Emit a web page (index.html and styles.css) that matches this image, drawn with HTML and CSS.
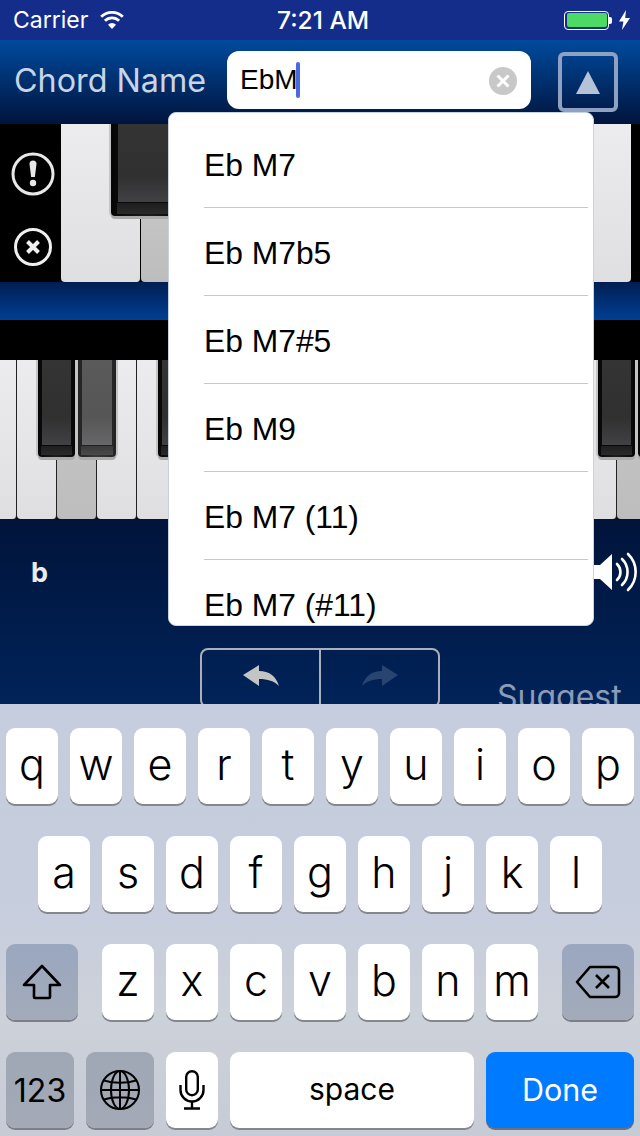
FILE: index.html
```html
<!DOCTYPE html>
<html lang="en">
<head>
    <meta charset="UTF-8">
    <title>Chord Name</title>
    <link rel="stylesheet" href="styles.css">
</head>
<body>
    <div id="app">
        <div class="status">
            <div class="status-left">
                <span>Carrier</span>
                <svg width="24" height="18" viewBox="0 0 24 18"><path d="M12 18 8 13.700a5.600 5.600 0 0 1 8 0z" fill="#fff"/><path d="M4.900 9.800a10 10 0 0 1 14.200 0M1.200 5.800a15.300 15.300 0 0 1 21.600 0" fill="none" stroke="#fff" stroke-width="2.800"/></svg>
            </div>
            <div class="status-time">7:21 AM</div>
            <div class="status-right">
                <div class="battery"><div class="battery-fill"></div></div>
                <div class="battery-nub"></div>
                <svg class="bolt" width="11" height="20" viewBox="0 0 11 20"><path d="M7 0 0 11.500h4.400L3 20l8-12H6.200z" fill="#fff"/></svg>
            </div>
        </div>

        <div class="header">
            <div class="chord-label">Chord Name</div>
            <div class="chord-input">
                <span class="chord-text">EbM</span><span class="caret"></span>
                <svg class="clear" width="28" height="28" viewBox="0 0 28 28"><circle cx="14" cy="14" r="14" fill="#c8c8c8"/><path d="M8.500 8.500l11 11M19.500 8.500l-11 11" stroke="#fff" stroke-width="3"/></svg>
            </div>
            <div class="up-btn"><svg width="24" height="23" viewBox="0 0 24 23"><path d="M12 0 24 23H0z" fill="#b6c2d6"/></svg></div>
        </div>

        <div class="upper">
            <div class="side">
                <svg width="44" height="44" viewBox="0 0 44 44"><circle cx="22" cy="22" r="20" fill="none" stroke="#e8e8e8" stroke-width="3"/><path d="M18.500 12a3.500 3.500 0 0 1 7 0l-1.600 13h-3.800z" fill="#e8e8e8"/><circle cx="22" cy="31" r="3.200" fill="#e8e8e8"/></svg>
                <svg width="40" height="40" viewBox="0 0 40 40"><circle cx="20" cy="20" r="17.500" fill="none" stroke="#f0f0f0" stroke-width="3"/><path d="M14.500 14.500l11 11M25.500 14.500l-11 11" stroke="#f0f0f0" stroke-width="4"/></svg>
            </div>
            <div class="upper-keys">
                <div class="wkey wide"></div>
                <div class="wkey wide grey"></div>
                <div class="wkey wide"></div>
                <div class="wkey wide"></div>
                <div class="wkey wide"></div>
                <div class="wkey wide"></div>
                <div class="wkey last"></div>
                <div class="bkey big"><div class="bkey-face"></div></div>
            </div>
            <div class="upper-end"></div>
        </div>

        <div class="band"></div>
        <div class="black-strip"></div>

        <div class="lower">
            <div class="wkey first"></div>
            <div class="wkey"></div>
            <div class="wkey grey"></div>
            <div class="wkey"></div>
            <div class="wkey"></div>
            <div class="wkey"></div>
            <div class="wkey"></div>
            <div class="wkey"></div>
            <div class="wkey"></div>
            <div class="wkey"></div>
            <div class="wkey"></div>
            <div class="wkey"></div>
            <div class="wkey"></div>
            <div class="wkey"></div>
            <div class="wkey"></div>
            <div class="wkey"></div>
            <div class="wkey grey"></div>
            <div class="bkey k1"><div class="bkey-face"></div></div>
            <div class="bkey k2 lit"><div class="bkey-face"></div></div>
            <div class="bkey k3"><div class="bkey-face"></div></div>
            <div class="bkey k4"><div class="bkey-face"></div></div>
            <div class="bkey k5"><div class="bkey-face"></div></div>
        </div>

        <div class="panel">
            <div class="panel-top">
                <span class="flat">b</span>
                <svg width="46" height="40" viewBox="0 0 46 40"><path d="M0 13h8L20 2v36L8 27H0z" fill="#fff"/><path d="M25 12a11 11 0 0 1 0 16M30 7a18 18 0 0 1 0 26M36 2a25 25 0 0 1 0 36" fill="none" stroke="#fff" stroke-width="2.600" stroke-linecap="round"/></svg>
            </div>
            <div class="panel-bottom">
                <div class="undo-group">
                    <div class="undo-cell"><svg width="36" height="22" viewBox="0 0 36 22"><path d="M0 10 16 0v6c10 0 17 5 20 15-5-5-11-7-20-7v7z" fill="#c4c4c4"/></svg></div>
                    <div class="undo-cell"><svg width="36" height="22" viewBox="0 0 36 22"><path d="M36 10 20 0v6C10 6 3 11 0 21c5-5 11-7 20-7v7z" fill="#2a4470"/></svg></div>
                </div>
                <div class="suggest">Suggest</div>
            </div>
        </div>

        <div class="keyboard">
            <div class="kb-row">
                <div class="key">q</div><div class="key">w</div><div class="key">e</div><div class="key">r</div><div class="key">t</div><div class="key">y</div><div class="key">u</div><div class="key">i</div><div class="key">o</div><div class="key">p</div>
            </div>
            <div class="kb-row">
                <div class="key">a</div><div class="key">s</div><div class="key">d</div><div class="key">f</div><div class="key">g</div><div class="key">h</div><div class="key">j</div><div class="key">k</div><div class="key">l</div>
            </div>
            <div class="kb-row row3">
                <div class="key fn shift"><svg width="40" height="36" viewBox="0 0 40 36"><path d="M20 2 38 21H28v12a1 1 0 0 1-1 1H13a1 1 0 0 1-1-1V21H2z" fill="none" stroke="#000" stroke-width="2.600" stroke-linejoin="round"/></svg></div>
                <div class="letters">
                    <div class="key">z</div><div class="key">x</div><div class="key">c</div><div class="key">v</div><div class="key">b</div><div class="key">n</div><div class="key">m</div>
                </div>
                <div class="key fn shift"><svg width="46" height="34" viewBox="0 0 46 34"><path d="M15 2h25a4 4 0 0 1 4 4v22a4 4 0 0 1-4 4H15L2 17z" fill="none" stroke="#000" stroke-width="2.600" stroke-linejoin="round"/><path d="M21 10l13 13M34 10 21 23" stroke="#000" stroke-width="2.600"/></svg></div>
            </div>
            <div class="kb-row">
                <div class="key fn grey-key num">123</div>
                <div class="key fn grey-key num"><svg width="40" height="40" viewBox="0 0 40 40" fill="none" stroke="#000" stroke-width="2"><circle cx="20" cy="20" r="19"/><ellipse cx="20" cy="20" rx="9" ry="19"/><path d="M20 1v38M1 20h38M4 10.500c9 3 23 3 32 0M4 29.500c9-3 23-3 32 0"/></svg></div>
                <div class="key mic"><svg width="26" height="40" viewBox="0 0 26 40" fill="none" stroke="#000" stroke-width="2.400"><rect x="7.200" y="1.200" width="11.600" height="24" rx="5.800"/><path d="M1.500 15v5a11.500 11.500 0 0 0 23 0v-5M13 31.500V38M5 38.500h16"/></svg></div>
                <div class="key space">space</div>
                <div class="key done">Done</div>
            </div>
        </div>

        <div class="dropdown">
            <div class="drop-row">Eb M7</div>
            <div class="drop-row">Eb M7b5</div>
            <div class="drop-row">Eb M7#5</div>
            <div class="drop-row">Eb M9</div>
            <div class="drop-row">Eb M7 (11)</div>
            <div class="drop-row">Eb M7 (#11)</div>
        </div>
    </div>
</body>
</html>
```

FILE: styles.css
```css
* {
    box-sizing: border-box;
}

body {
    margin: 0;
    font-family: 'Inter', 'Liberation Sans', sans-serif;
    background: #000;
}

#app {
    position: relative;
    width: 640px;
    height: 1136px;
    overflow: hidden;
}

/* status bar */
.status {
    height: 40px;
    background: #142d8a;
    color: #fff;
    font-size: 23px;
    padding: 0 10px 0 13px;
    display: flex;
    align-items: center;
    justify-content: space-between;
    position: relative;
}

.status-left {
    display: flex;
    align-items: center;
    gap: 12px;
}

.status-time {
    position: absolute;
    left: 277px;
    font-size: 24.5px;
    font-weight: 500;
}

.status-right {
    display: flex;
    align-items: center;
}

.battery {
    width: 45px;
    height: 19px;
    border: 1.5px solid #fff;
    border-radius: 4px;
    padding: 1.5px;
}

.battery-fill {
    height: 100%;
    background: #4cd964;
    border-radius: 2px;
}

.battery-nub {
    width: 3px;
    height: 7px;
    background: #fff;
    border-radius: 0 2px 2px 0;
}

.bolt {
    margin-left: 7px;
}

/* chord name header */
.header {
    height: 84px;
    background: linear-gradient(#004a9e, #00143c);
    display: flex;
    align-items: flex-start;
    padding-left: 15px;
    position: relative;
}

.chord-label {
    color: #c9d5e6;
    font-size: 32.3px;
    line-height: 82px;
    margin-left: -1px;
    flex: none;
    width: 213px;
}

.chord-input {
    margin-top: 11px;
    width: 304px;
    height: 58px;
    background: #fff;
    border-radius: 12px;
    padding-left: 13px;
    display: flex;
    align-items: center;
    position: relative;
}

.chord-text {
    font-family: 'Liberation Sans', sans-serif;
    font-size: 28px;
    color: #000;
}

.caret {
    width: 4px;
    height: 36px;
    background: #4a68e0;
    border-radius: 2px;
    margin-left: -2px;
}

.clear {
    position: absolute;
    right: 14px;
    top: 16px;
}

.up-btn {
    margin: 12px 0 0 27px;
    width: 60px;
    height: 60px;
    border: 4px solid #8ea1c2;
    border-radius: 6px;
    display: flex;
    align-items: center;
    justify-content: center;
}

/* upper keyboard */
.upper {
    height: 158px;
    display: flex;
    background: #000;
}

.side {
    width: 61px;
    padding: 28px 0 12px 5px;
    display: flex;
    flex-direction: column;
    align-items: center;
    gap: 31px;
}

.upper-keys {
    flex: 1;
    display: flex;
    position: relative;
    overflow: hidden;
}

.upper-end {
    width: 9px;
}

.wkey {
    width: 40px;
    flex: none;
    height: 100%;
    background: linear-gradient(#ececee, #dfdfe2);
    border-right: 1.5px solid #222;
    border-radius: 0 0 4px 4px;
}

.wkey.wide {
    width: 80px;
    border-right-color: #000;
}

.wkey.first {
    width: 17px;
    border-radius: 0 0 4px 0;
}

.wkey.last {
    width: 90px;
    border-right: 0;
}

.wkey.grey {
    background: linear-gradient(#c8c8c8, #bdbdbd);
}

.upper-keys .wkey.grey {
    background: linear-gradient(#e8e8ea 0, #e8e8ea 59%, #c4c4c4 59%, #bdbdbd 100%);
}

/* black keys sit on top of the white ones */
.bkey {
    position: absolute;
    top: 0;
    height: 97px;
    background: linear-gradient(90deg, #050505, #1c1c1c 50%, #050505);
    border-radius: 0 0 4px 4px;
    padding: 0 4px 10px;
    box-shadow: 0 3px 0 #aaa, -2px 0 0 #c4c4c4, 2px 0 0 #c4c4c4;
}

.bkey::after {
    content: "";
    position: absolute;
    left: 3px;
    right: 3px;
    bottom: 2px;
    height: 9px;
    background: linear-gradient(#1e1e1e, #2a2a2a);
    border-top: 1px solid #080808;
}

.bkey-face {
    height: 100%;
    background: linear-gradient(#343434, #303030 65%, #434347);
}

.bkey.big {
    left: 50px;
    width: 74px;
    height: 92px;
    padding: 0 7px 12px;
}

.bkey.big::after {
    left: 6px;
    right: 6px;
    height: 11px;
}

.bkey.k1 { left: 38px; width: 37px; }
.bkey.k2 { left: 78px; width: 38px; }
.bkey.k3 { left: 158px; width: 37px; }
.bkey.k4 { left: 598px; width: 37px; }
.bkey.k5 { left: 638px; width: 37px; }

.bkey.lit {
    background: linear-gradient(90deg, #222, #383838 50%, #222);
}

.bkey.lit::after {
    background: linear-gradient(#3a3a3a, #4a4a4a);
    border-top-color: #222;
}

.bkey.lit .bkey-face {
    background: linear-gradient(#5a5a5a, #565656 65%, #68686c);
}

.band {
    height: 38px;
    background: linear-gradient(#001e52, #003f94);
}

.black-strip {
    height: 40px;
    background: #000;
}

/* lower keyboard */
.lower {
    height: 159px;
    display: flex;
    position: relative;
    overflow: hidden;
    background: #111;
}

/* bottom panel */
.panel {
    height: 185px;
    background: linear-gradient(#00143a, #002359);
    padding: 31px 2px 0 31px;
    overflow: hidden;
}

.panel-top {
    display: flex;
    justify-content: space-between;
    align-items: center;
    height: 44px;
}

.flat {
    color: #e8edf5;
    font-size: 27px;
    font-weight: 700;
}

.panel-bottom {
    position: relative;
    margin-top: 54px;
    padding-left: 169px;
}

.undo-group {
    width: 240px;
    height: 60px;
    border: 2px solid #a9b0bc;
    border-radius: 8px;
    display: flex;
}

.undo-cell {
    flex: 1;
    display: flex;
    align-items: center;
    justify-content: center;
    padding-bottom: 4px;
}

.undo-cell:first-child {
    flex: none;
    width: 117px;
}

.undo-cell + .undo-cell {
    border-left: 2px solid #a9b0bc;
}

.suggest {
    position: absolute;
    left: 466px;
    top: 29px;
    color: #8c9cb6;
    font-size: 32px;
}

/* system keyboard */
.keyboard {
    height: 432px;
    background: linear-gradient(#c5cdde, #c6cddd 45%, #cdd1d9 72%, #c6cbd6);
    padding: 24px 6px 8px;
    display: flex;
    flex-direction: column;
    gap: 32px;
}

.kb-row {
    display: flex;
    justify-content: center;
    gap: 12px;
}

.kb-row.row3 {
    justify-content: space-between;
}

.letters {
    display: flex;
    gap: 12px;
}

.key {
    width: 52px;
    height: 76px;
    background: #fff;
    border-radius: 9px;
    box-shadow: 0 2px 0 #85878c;
    display: flex;
    align-items: center;
    justify-content: center;
    font-size: 43px;
    font-weight: 300;
    color: #000;
    padding-bottom: 5px;
}

.key.fn {
    background: linear-gradient(#9aa7c0, #a3abba);
    box-shadow: 0 2px 0 #7c7f88;
    padding-bottom: 0;
}

.key.shift {
    width: 72px;
}

.key.num {
    width: 68px;
    font-size: 32px;
    font-weight: 400;
}

.key.grey-key {
    background: linear-gradient(#9fa7b5, #a4a9b6);
}

.key.mic {
    padding-bottom: 0;
}

.key.space {
    width: 244px;
    font-size: 30px;
    font-weight: 400;
    padding-bottom: 2px;
}

.key.done {
    width: 148px;
    background: #007aff;
    color: #fff;
    font-size: 30.5px;
    font-weight: 400;
    box-shadow: 0 2px 0 #6d7078;
    padding-bottom: 2px;
}

/* chord suggestions */
.dropdown {
    position: absolute;
    left: 168px;
    top: 112px;
    width: 426px;
    height: 514px;
    background: #fff;
    border: 1px solid #c9d2e0;
    border-radius: 8px;
    padding: 7px 5px 0 35px;
    overflow: hidden;
}

.drop-row {
    height: 88px;
    line-height: 90px;
    font-family: 'Liberation Sans', sans-serif;
    font-size: 31.8px;
    color: #000;
    border-bottom: 1px solid #c8c8c8;
}
```
